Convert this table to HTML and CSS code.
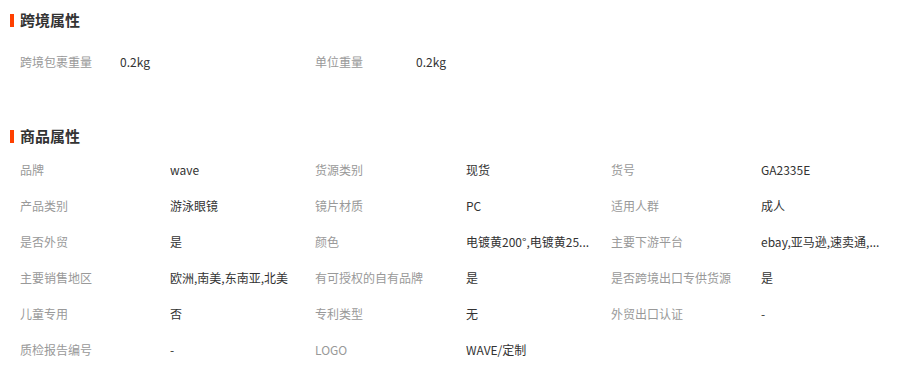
FILE: index.html
```html
<!DOCTYPE html>
<html lang="zh-CN">
<head>
<meta charset="utf-8">
<title>商品属性</title>
<link rel="stylesheet" href="styles.css">
</head>
<body>
<div class="page">
  <section class="section section-cross">
    <h2 class="section-title">跨境属性</h2>
    <div class="attr-grid attr-grid-cross">
      <div class="attr-label">跨境包裹重量</div><div class="attr-value">0.2kg</div>
      <div class="attr-label">单位重量</div><div class="attr-value">0.2kg</div>
    </div>
  </section>
  <section class="section section-goods">
    <h2 class="section-title">商品属性</h2>
    <div class="attr-grid attr-grid-goods">
      <div class="attr-label">品牌</div><div class="attr-value">wave</div>
      <div class="attr-label">货源类别</div><div class="attr-value">现货</div>
      <div class="attr-label">货号</div><div class="attr-value">GA2335E</div>

      <div class="attr-label">产品类别</div><div class="attr-value">游泳眼镜</div>
      <div class="attr-label">镜片材质</div><div class="attr-value">PC</div>
      <div class="attr-label">适用人群</div><div class="attr-value">成人</div>

      <div class="attr-label">是否外贸</div><div class="attr-value">是</div>
      <div class="attr-label">颜色</div><div class="attr-value">电镀黄200°,电镀黄25...</div>
      <div class="attr-label">主要下游平台</div><div class="attr-value">ebay,亚马逊,速卖通,...</div>

      <div class="attr-label">主要销售地区</div><div class="attr-value">欧洲,南美,东南亚,北美</div>
      <div class="attr-label">有可授权的自有品牌</div><div class="attr-value">是</div>
      <div class="attr-label">是否跨境出口专供货源</div><div class="attr-value">是</div>

      <div class="attr-label">儿童专用</div><div class="attr-value">否</div>
      <div class="attr-label">专利类型</div><div class="attr-value">无</div>
      <div class="attr-label">外贸出口认证</div><div class="attr-value">-</div>

      <div class="attr-label">质检报告编号</div><div class="attr-value">-</div>
      <div class="attr-label">LOGO</div><div class="attr-value">WAVE/定制</div>
    </div>
  </section>
</div>
</body>
</html>
```
FILE: styles.css
```css
html, body {
  margin: 0;
  padding: 0;
  background: #fff;
}
body {
  font-family: "Noto Sans CJK SC", "Noto Sans", "Liberation Sans", sans-serif;
  font-size: 12px;
  color: #333;
}
.page {
  width: 916px;
  padding: 10px 0 0 10px;
  box-sizing: border-box;
}
.section-title {
  display: flex;
  align-items: center;
  margin: 0;
  height: 20px;
  font-size: 15px;
  line-height: 20px;
  font-weight: bold;
  color: #333;
}
.section-title::before {
  content: "";
  width: 4px;
  height: 13px;
  background: #ff4000;
  margin-right: 6px;
}
.section-goods {
  margin-top: 46px;
}
.attr-grid {
  display: grid;
  padding-left: 10px;
  margin-top: 6px;
}
.attr-grid-cross {
  grid-template-columns: 100px 195px 101px 195px;
  padding-top: 8px;
}
.attr-grid-goods {
  grid-template-columns: 150px 145px 151px 145px 150px 145px;
}
.attr-label,
.attr-value {
  height: 36px;
  line-height: 36px;
  white-space: nowrap;
  overflow: hidden;
}
.attr-label {
  color: #999;
}
.attr-value {
  color: #333;
}
```
